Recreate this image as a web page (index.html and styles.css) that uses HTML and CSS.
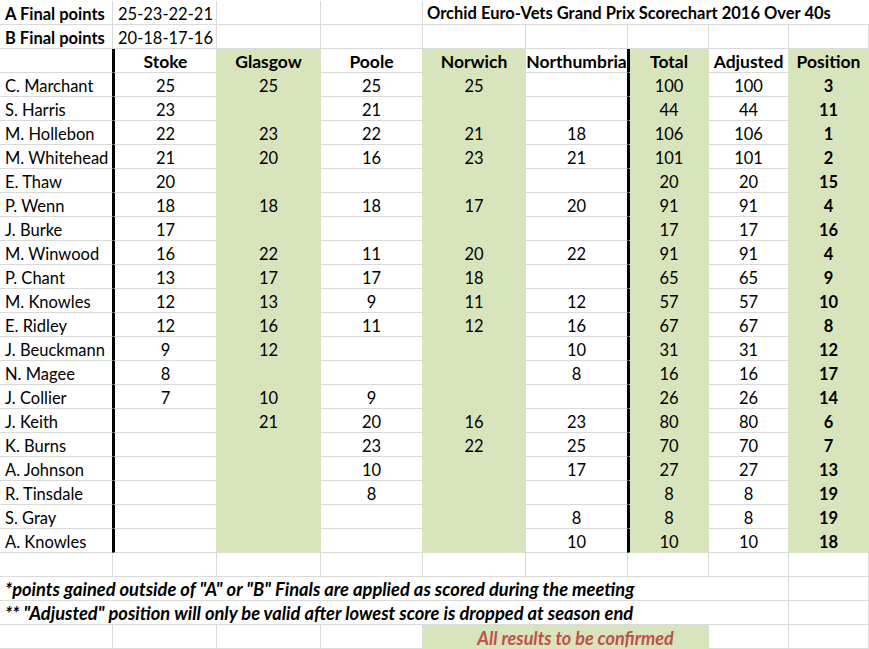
FILE: index.html
```html
<!DOCTYPE html>
<html>
<head>
<meta charset="utf-8">
<link rel="stylesheet" href="styles.css">
</head>
<body>
<div class="sheet">
  <div class="c l b">A Final points</div><div class="c l">25-23-22-21</div><div class="c"></div><div class="c"></div><div class="c title b">Orchid Euro-Vets Grand Prix Scorechart 2016 Over 40s</div>
  <div class="c l b">B Final points</div><div class="c l">20-18-17-16</div><div class="c"></div><div class="c"></div><div class="c"></div><div class="c"></div><div class="c"></div><div class="c"></div><div class="c"></div>

  <div class="c tr"></div><div class="c tl gn b h">Stoke</div><div class="c g b h">Glasgow</div><div class="c gn b h">Poole</div><div class="c g b h">Norwich</div><div class="c tr b h">Northumbria</div><div class="c g tl b h">Total</div><div class="c gn b h">Adjusted</div><div class="c g b h">Position</div>

  <div class="c l tr">C. Marchant</div><div class="c tl gn">25</div><div class="c g">25</div><div class="c gn">25</div><div class="c g">25</div><div class="c tr"></div><div class="c g tl">100</div><div class="c gn">100</div><div class="c g b">3</div>
  <div class="c l tr">S. Harris</div><div class="c tl gn">23</div><div class="c g"></div><div class="c gn">21</div><div class="c g"></div><div class="c tr"></div><div class="c g tl">44</div><div class="c gn">44</div><div class="c g b">11</div>
  <div class="c l tr">M. Hollebon</div><div class="c tl gn">22</div><div class="c g">23</div><div class="c gn">22</div><div class="c g">21</div><div class="c tr">18</div><div class="c g tl">106</div><div class="c gn">106</div><div class="c g b">1</div>
  <div class="c l tr">M. Whitehead</div><div class="c tl gn">21</div><div class="c g">20</div><div class="c gn">16</div><div class="c g">23</div><div class="c tr">21</div><div class="c g tl">101</div><div class="c gn">101</div><div class="c g b">2</div>
  <div class="c l tr">E. Thaw</div><div class="c tl gn">20</div><div class="c g"></div><div class="c gn"></div><div class="c g"></div><div class="c tr"></div><div class="c g tl">20</div><div class="c gn">20</div><div class="c g b">15</div>
  <div class="c l tr">P. Wenn</div><div class="c tl gn">18</div><div class="c g">18</div><div class="c gn">18</div><div class="c g">17</div><div class="c tr">20</div><div class="c g tl">91</div><div class="c gn">91</div><div class="c g b">4</div>
  <div class="c l tr">J. Burke</div><div class="c tl gn">17</div><div class="c g"></div><div class="c gn"></div><div class="c g"></div><div class="c tr"></div><div class="c g tl">17</div><div class="c gn">17</div><div class="c g b">16</div>
  <div class="c l tr">M. Winwood</div><div class="c tl gn">16</div><div class="c g">22</div><div class="c gn">11</div><div class="c g">20</div><div class="c tr">22</div><div class="c g tl">91</div><div class="c gn">91</div><div class="c g b">4</div>
  <div class="c l tr">P. Chant</div><div class="c tl gn">13</div><div class="c g">17</div><div class="c gn">17</div><div class="c g">18</div><div class="c tr"></div><div class="c g tl">65</div><div class="c gn">65</div><div class="c g b">9</div>
  <div class="c l tr">M. Knowles</div><div class="c tl gn">12</div><div class="c g">13</div><div class="c gn">9</div><div class="c g">11</div><div class="c tr">12</div><div class="c g tl">57</div><div class="c gn">57</div><div class="c g b">10</div>
  <div class="c l tr">E. Ridley</div><div class="c tl gn">12</div><div class="c g">16</div><div class="c gn">11</div><div class="c g">12</div><div class="c tr">16</div><div class="c g tl">67</div><div class="c gn">67</div><div class="c g b">8</div>
  <div class="c l tr">J. Beuckmann</div><div class="c tl gn">9</div><div class="c g">12</div><div class="c gn"></div><div class="c g"></div><div class="c tr">10</div><div class="c g tl">31</div><div class="c gn">31</div><div class="c g b">12</div>
  <div class="c l tr">N. Magee</div><div class="c tl gn">8</div><div class="c g"></div><div class="c gn"></div><div class="c g"></div><div class="c tr">8</div><div class="c g tl">16</div><div class="c gn">16</div><div class="c g b">17</div>
  <div class="c l tr">J. Collier</div><div class="c tl gn">7</div><div class="c g">10</div><div class="c gn">9</div><div class="c g"></div><div class="c tr"></div><div class="c g tl">26</div><div class="c gn">26</div><div class="c g b">14</div>
  <div class="c l tr">J. Keith</div><div class="c tl gn"></div><div class="c g">21</div><div class="c gn">20</div><div class="c g">16</div><div class="c tr">23</div><div class="c g tl">80</div><div class="c gn">80</div><div class="c g b">6</div>
  <div class="c l tr">K. Burns</div><div class="c tl gn"></div><div class="c g"></div><div class="c gn">23</div><div class="c g">22</div><div class="c tr">25</div><div class="c g tl">70</div><div class="c gn">70</div><div class="c g b">7</div>
  <div class="c l tr">A. Johnson</div><div class="c tl gn"></div><div class="c g"></div><div class="c gn">10</div><div class="c g"></div><div class="c tr">17</div><div class="c g tl">27</div><div class="c gn">27</div><div class="c g b">13</div>
  <div class="c l tr">R. Tinsdale</div><div class="c tl gn"></div><div class="c g"></div><div class="c gn">8</div><div class="c g"></div><div class="c tr"></div><div class="c g tl">8</div><div class="c gn">8</div><div class="c g b">19</div>
  <div class="c l tr">S. Gray</div><div class="c tl gn"></div><div class="c g"></div><div class="c gn"></div><div class="c g"></div><div class="c tr">8</div><div class="c g tl">8</div><div class="c gn">8</div><div class="c g b">19</div>
  <div class="c l tr">A. Knowles</div><div class="c tl gn"></div><div class="c g"></div><div class="c gn"></div><div class="c g"></div><div class="c tr">10</div><div class="c g tl">10</div><div class="c gn">10</div><div class="c g b">18</div>

  <div class="c"></div><div class="c"></div><div class="c"></div><div class="c"></div><div class="c"></div><div class="c"></div><div class="c"></div><div class="c"></div><div class="c"></div>
  <div class="c note">*points gained outside of "A" or "B" Finals are applied as scored during the meeting</div><div class="c"></div><div class="c"></div>
  <div class="c note">** "Adjusted" position will only be valid after lowest score is dropped at season end</div><div class="c"></div><div class="c"></div>
  <div class="c"></div><div class="c"></div><div class="c"></div><div class="c"></div><div class="c gm confirm">All results to be confirmed</div><div class="c"></div><div class="c"></div>
</div>
</body>
</html>
```

FILE: styles.css
```css
html, body {
  margin: 0;
  padding: 0;
  background: #ffffff;
}

body {
  font-family: Lato, "Liberation Sans", sans-serif;
  font-size: 16.5px;
  color: #000000;
}

.sheet {
  display: grid;
  grid-template-columns: 113px 104px 104px 102px 103px 102px 81px 80px 80px;
  grid-auto-rows: 24px;
  padding-top: 1px;
  width: 869px;
}

.c {
  box-sizing: border-box;
  border-right: 1px solid #dadada;
  border-bottom: 1px solid #dadada;
  display: flex;
  align-items: flex-end;
  justify-content: center;
  padding-bottom: 0;
  white-space: nowrap;
  line-height: 19px;
  overflow: visible;
}

.l {
  justify-content: flex-start;
  padding-left: 5px;
}

.b {
  font-weight: bold;
}

.h {
  font-size: 17.5px;
  padding-bottom: 1px;
}

.g {
  background: #d8e4bc;
  border-right-color: #d8e4bc;
  border-bottom-color: #d8e4bc;
}

.gn {
  border-right-color: #d8e4bc;
}

.tr {
  border-right-color: #000000;
}

.tl {
  border-left: 2px solid #000000;
}

.title {
  grid-column: span 5;
  justify-content: flex-start;
  padding-left: 4px;
  padding-bottom: 1px;
  border-right: none;
  font-size: 16.5px;
}

.note {
  grid-column: span 7;
  justify-content: flex-start;
  padding-left: 5px;
  padding-bottom: 1px;
  font-weight: bold;
  font-style: italic;
  font-size: 18.3px;
  border-right: none;
}

.gm {
  grid-column: span 3;
  background: #d8e4bc;
  border-right-color: #d8e4bc;
  border-bottom-color: #d8e4bc;
}

.confirm {
  color: #c0504d;
  font-weight: bold;
  font-style: italic;
  font-size: 18px;
  padding-left: 20px;
}
```
